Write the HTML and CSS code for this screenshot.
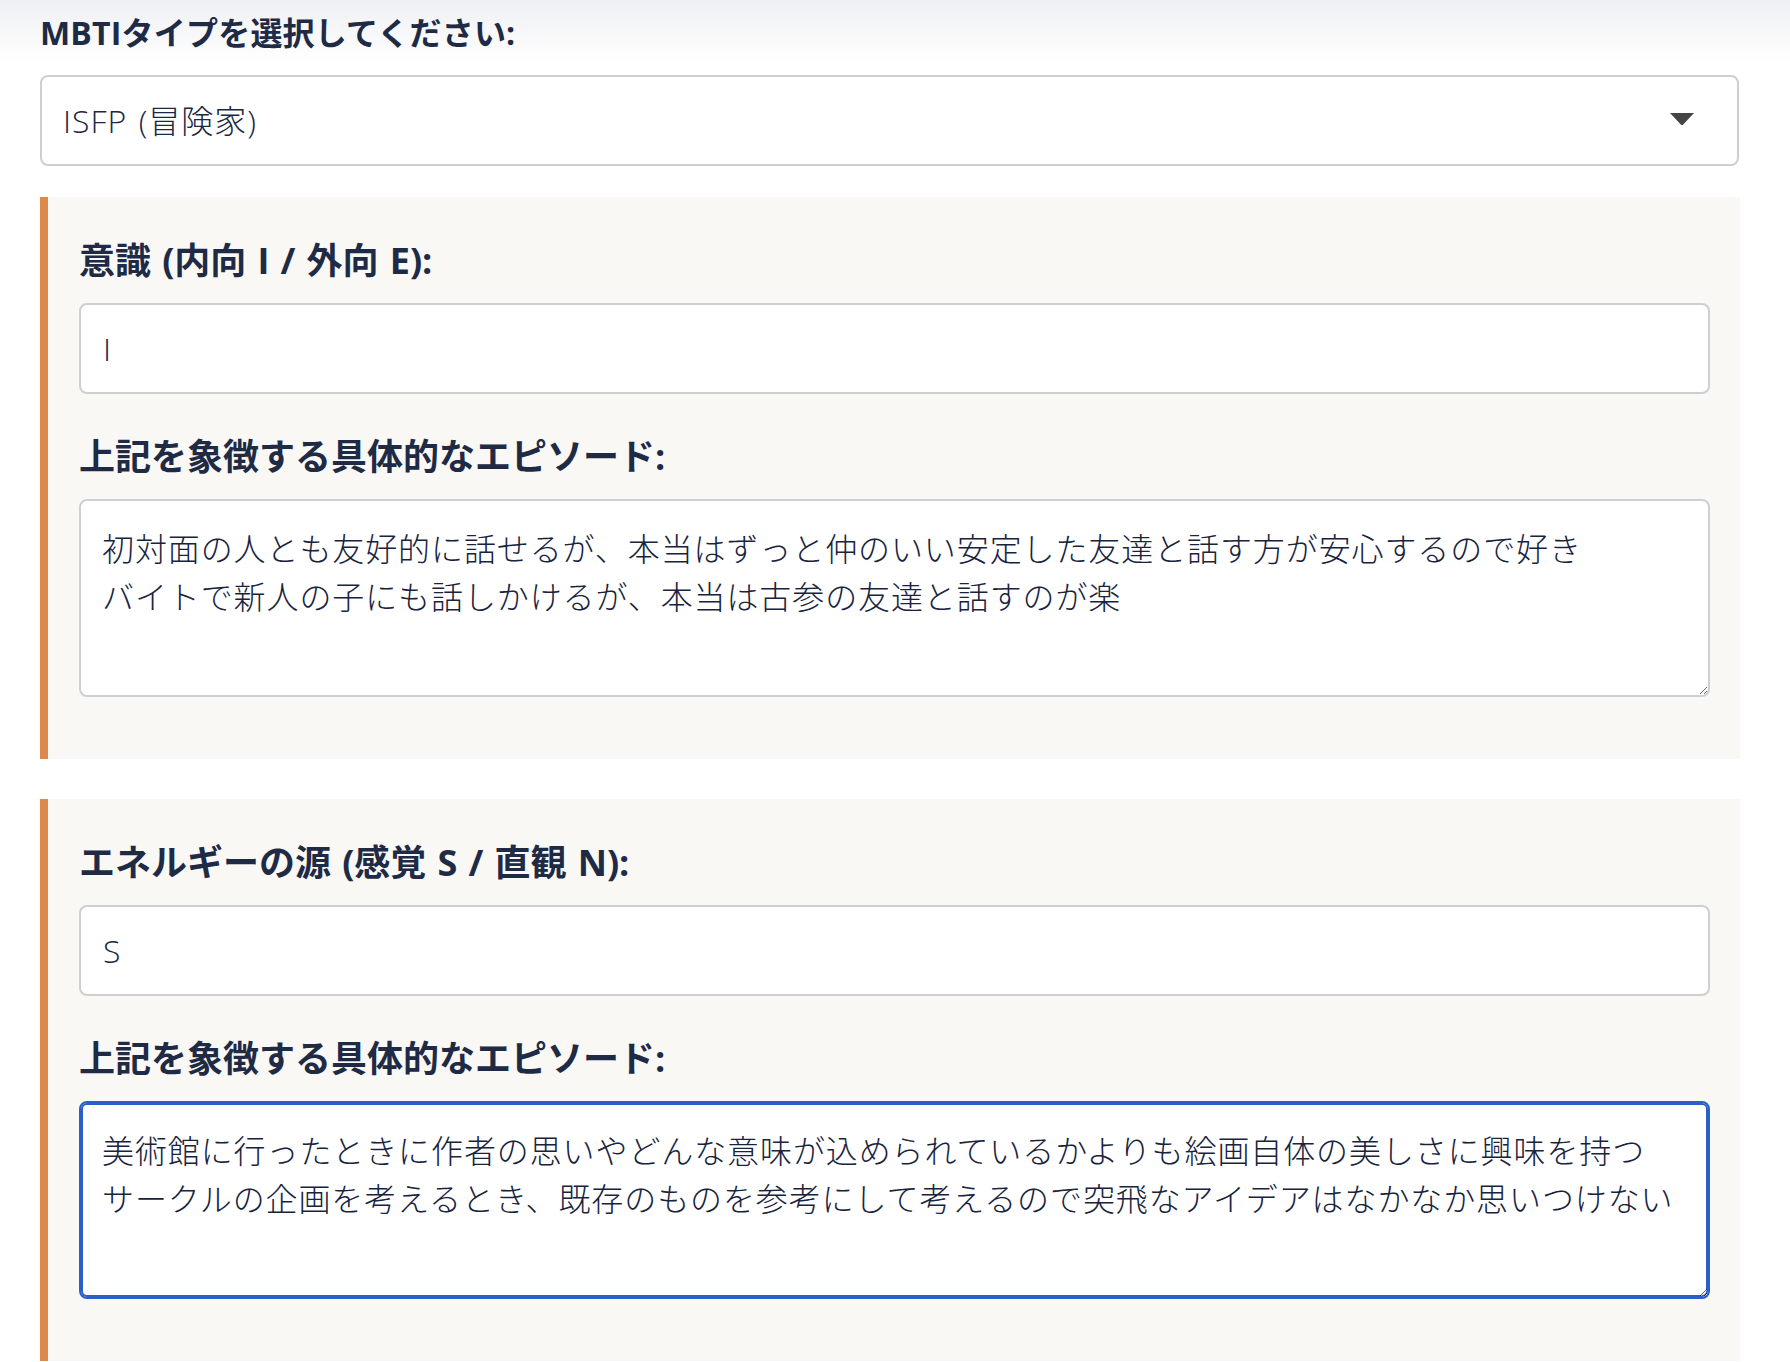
FILE: index.html
```html
<!DOCTYPE html>
<html lang="ja">
<head>
<meta charset="utf-8">
<title>MBTI</title>
<link rel="stylesheet" href="styles.css">
</head>
<body>
<main class="page">
  <h2 class="title">MBTIタイプを選択してください:</h2>
  <div class="select">
    <span class="select-value">ISFP (冒険家)</span>
    <svg class="select-arrow" width="26" height="14" viewBox="0 0 26 14"><path d="M1 1 H25 L14.2 12.4 Q13 13.6 11.8 12.4 Z" fill="#454545"/></svg>
  </div>

  <section class="panel">
    <div class="field">
      <label class="label">意識 (内向 I / 外向 E):</label>
      <input class="input" type="text" value="I">
    </div>
    <div class="field">
      <label class="label">上記を象徴する具体的なエピソード:</label>
      <textarea class="textarea" wrap="off">初対面の人とも友好的に話せるが、本当はずっと仲のいい安定した友達と話す方が安心するので好き
バイトで新人の子にも話しかけるが、本当は古参の友達と話すのが楽</textarea>
    </div>
  </section>

  <section class="panel">
    <div class="field">
      <label class="label">エネルギーの源 (感覚 S / 直観 N):</label>
      <input class="input" type="text" value="S">
    </div>
    <div class="field">
      <label class="label">上記を象徴する具体的なエピソード:</label>
      <textarea class="textarea focused" wrap="off">美術館に行ったときに作者の思いやどんな意味が込められているかよりも絵画自体の美しさに興味を持つ
サークルの企画を考えるとき、既存のものを参考にして考えるので突飛なアイデアはなかなか思いつけない</textarea>
    </div>
  </section>
</main>
</body>
</html>
```

FILE: styles.css
```css
html, body {
  margin: 0;
  padding: 0;
}
body {
  background: linear-gradient(to bottom, #eff0f3 0px, #ffffff 64px) no-repeat;
  background-color: #ffffff;
  font-family: "Open Sans", "Noto Sans CJK JP", sans-serif;
  color: #1f2b45;
}
.page {
  width: 1700px;
  margin-left: 40px;
  padding-top: 9px;
}
.title {
  margin: 0;
  font-family: "Open Sans", "Noto Sans CJK JP", sans-serif;
  font-size: 32px;
  line-height: 48px;
  font-weight: 700;
  letter-spacing: 0.2px;
  color: #1f2b45;
}
.select {
  margin-top: 18px;
  height: 91px;
  box-sizing: border-box;
  width: 1699px;
  border: 2px solid #cfcfcf;
  border-radius: 8px;
  background: #ffffff;
  display: flex;
  align-items: center;
  justify-content: space-between;
  padding: 0 42px 0 21px;
}
.select-value {
  font-family: "Open Sans", "Noto Sans CJK JP", sans-serif;
  font-size: 32px;
  font-weight: 300;
  letter-spacing: 1px;
  word-spacing: 2px;
  color: #1c2742;
  line-height: 48px;
}
.select-arrow {
  display: block;
  margin-bottom: 3px;
}
.panel {
  margin-top: 31px;
  background: #f9f8f5;
  border-left: 8px solid #db8a4c;
  padding: 37px 30px 26px 31px;
}
.panel + .panel {
  margin-top: 40px;
}
.field {
  display: flex;
  flex-direction: column;
}
.field + .field {
  margin-top: 36px;
}
.field:last-child {
  margin-bottom: 36px;
}
.label {
  font-family: "Open Sans", "Noto Sans CJK JP", sans-serif;
  font-size: 36px;
  line-height: 54px;
  font-weight: 700;
  word-spacing: 1.8px;
  color: #1f2b45;
  margin-bottom: 15px;
}
.input {
  height: 91px;
  box-sizing: border-box;
  border: 2px solid #cfcfcf;
  border-radius: 8px;
  background: #ffffff;
  padding: 0 22px;
  font-family: "Open Sans", "Noto Sans CJK JP", sans-serif;
  font-size: 32px;
  font-weight: 300;
  color: #1c2742;
  outline: none;
}
.textarea {
  height: 198px;
  box-sizing: border-box;
  border: 2px solid #cfcfcf;
  border-radius: 8px;
  background: #ffffff;
  padding: 22px 21px;
  font-family: "Noto Sans CJK JP", "Open Sans", sans-serif;
  font-size: 32px;
  letter-spacing: 0.9px;
  line-height: 48px;
  font-weight: 300;
  color: #18233d;
  outline: none;
  overflow: hidden;
  resize: vertical;
}
.textarea.focused {
  border-color: #2a5fc8;
  box-shadow: inset 0 0 0 2px #2a5fc8;
}
```
